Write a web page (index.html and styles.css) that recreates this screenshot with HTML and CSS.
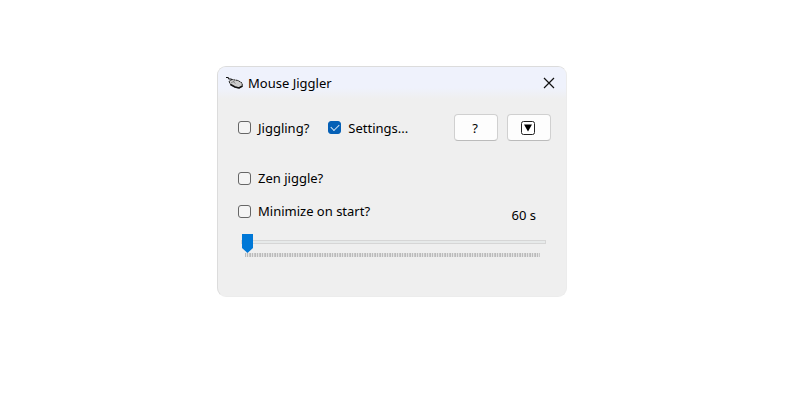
FILE: index.html
```html
<!DOCTYPE html>
<html lang="en">
<head>
  <meta charset="UTF-8" />
  <title>Mouse Jiggler</title>
  <meta name="viewport" content="width=device-width, initial-scale=1.0" />
  <link rel="stylesheet" href="styles.css">
</head>
<body>
  <main class="window">
    <header class="titlebar">
      <svg class="app-icon" viewBox="0 0 18 14" aria-hidden="true">
        <path d="M0 1.500h2l1 1.500h2l1 1" fill="none" stroke="#111" stroke-width="1.200"/>
        <path d="M3 5.500L6 3.500L12 4.500L16 7L16.500 10L13 12L9 11L4.500 8.500Z" fill="#ccc" stroke="#222" stroke-width="1" stroke-dasharray="2 .5"/>
        <path d="M4.500 8.500L9 11L13 12L16.500 10" fill="none" stroke="#111" stroke-width="1.600"/>
        <path d="M5 7L9 4.500M7 5.500L9.500 7.500" stroke="#777" stroke-width=".8"/>
      </svg>
      <h1>Mouse Jiggler</h1>
      <button class="close" aria-label="Close">
        <svg viewBox="0 0 12 12" width="12" height="12"><path d="M1 1l10 10M11 1L1 11" stroke="#111" stroke-width="1.200"/></svg>
      </button>
    </header>

    <div class="toolbar">
      <label class="check"><input type="checkbox" />Jiggling?</label>
      <label class="check"><input type="checkbox" checked />Settings...</label>
      <div class="buttons">
        <button class="btn">?</button>
        <button class="btn" aria-label="Minimize to tray">
          <svg viewBox="0 0 14 14" width="14" height="14"><rect x=".5" y=".5" width="13" height="13" rx="2" fill="#fff" stroke="#222" stroke-width="1"/><path d="M3 3.500h8L7 10.500z" fill="#000"/></svg>
        </button>
      </div>
    </div>

    <div class="settings">
      <label class="check"><input type="checkbox" />Zen jiggle?</label>
      <div class="row">
        <label class="check"><input type="checkbox" />Minimize on start?</label>
        <output class="seconds" for="period">60 s</output>
      </div>
      <input class="slider" id="period" type="range" min="1" max="60" value="1" aria-label="Jiggle period" />
      <div class="ticks"></div>
    </div>
  </main>
</body>
</html>
```
FILE: styles.css
```css
* {
  box-sizing: border-box;
}
body {
  margin: 0;
  padding: 66px 228px 0 217px;
  background: #fff;
  color: #000;
  font-family: 'Segoe UI', 'Noto Sans', sans-serif;
  font-size: 13px;
  line-height: 18px;
}
button, input {
  font: inherit;
  margin: 0;
}
.window {
  min-width: 340px;
  padding-bottom: 39px;
  background: #efefef;
  border: 1px solid #dcdcdc;
  border-right-color: #ececec;
  border-bottom-color: #ececec;
  border-radius: 9px;
  overflow: hidden;
}
.titlebar {
  display: flex;
  align-items: center;
  height: 32px;
  padding: 0 10px 0 8px;
  background: linear-gradient(#eff2fc 65%, #efefef);
}
.app-icon {
  width: 18px;
  height: 14px;
  margin-right: 4px;
}
h1 {
  flex: 1;
  margin: 0;
  font-size: 13px;
  line-height: 16px;
  font-weight: normal;
}
.close {
  display: flex;
  padding: 1px;
  border: 0;
  background: none;
}
.toolbar {
  display: flex;
  align-items: center;
  gap: 19px;
  padding: 15px 15px 0 20px;
}
.check {
  display: flex;
  align-items: center;
  gap: 7px;
}
.check input {
  appearance: none;
  width: 13px;
  height: 13px;
  background: #f4f4f4;
  border: 1px solid #666;
  border-radius: 3px;
}
.check input:checked {
  display: grid;
  place-items: center;
  background: #0560b6;
  border-color: #0560b6;
}
.check input:checked::after {
  content: '';
  width: 7px;
  height: 4px;
  margin-bottom: 2px;
  border: solid #d5e6f5;
  border-width: 0 0 1px 1px;
  transform: rotate(-45deg);
}
.buttons {
  display: flex;
  gap: 9px;
  margin-left: auto;
}
.btn {
  display: grid;
  place-items: center;
  width: 44px;
  height: 27px;
  padding: 0 2px 0 0;
  color: #000;
  background: #fdfdfd;
  border: 1px solid #d0d0d0;
  border-bottom-color: #bbb;
  border-radius: 4px;
}
.settings {
  padding: 28px 20px 0;
}
.row {
  display: flex;
  justify-content: space-between;
  align-items: end;
  height: 37px;
  padding-right: 10px;
}
.row .check {
  padding-bottom: 4px;
}
.slider {
  appearance: none;
  display: block;
  width: 100%;
  height: 20px;
  margin-top: 8px;
  padding: 0 0 0 3px;
  background: none;
}
.slider::-webkit-slider-runnable-track {
  height: 4px;
  background: #e7eaea;
  border: 1px solid #d6d6d6;
}
.slider::-webkit-slider-thumb {
  appearance: none;
  width: 11px;
  height: 19px;
  margin-top: -7px;
  background: #0078d7;
  clip-path: polygon(0 0, 100% 0, 100% 74%, 50% 100%, 0 74%);
}
.ticks {
  height: 4px;
  margin: 1px 6px 0 7px;
  background: repeating-linear-gradient(90deg, #bbb 0 1px, #e4e4e4 1px 2px, #bbb 2px 3px, #e4e4e4 3px 4px, #c8c8c8 4px 5px);
}
```
